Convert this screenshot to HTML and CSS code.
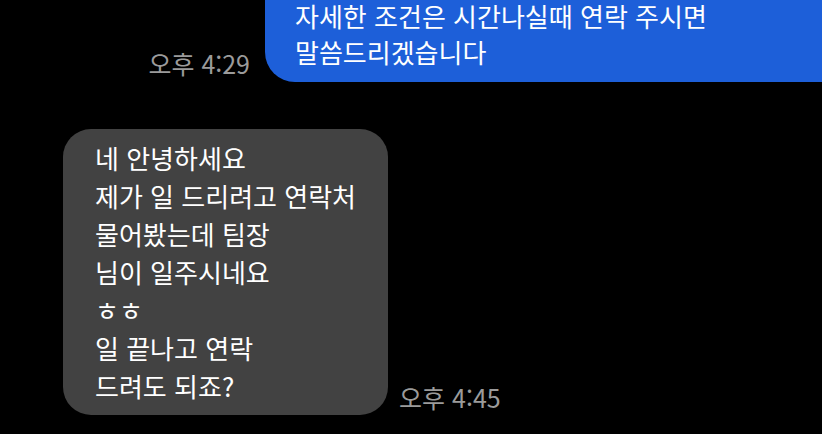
FILE: index.html
```html
<!DOCTYPE html>
<html lang="ko">
<head>
    <meta charset="UTF-8">
    <meta name="viewport" content="width=device-width, initial-scale=1.0">
    <title>대화</title>
    <link rel="stylesheet" href="styles.css">
</head>
<body>
    <div class="chat">
        <div class="row sent">
            <span class="time">오후 4:29</span>
            <div class="bubble blue">
                자세한 조건은 시간나실때 연락 주시면<br>
                말씀드리겠습니다
            </div>
        </div>

        <div class="row received">
            <div class="bubble grey">
                네 안녕하세요<br>
                제가 일 드리려고 연락처<br>
                물어봤는데 팀장<br>
                님이 일주시네요<br>
                ㅎㅎ<br>
                일 끝나고 연락<br>
                드려도 되죠?
            </div>
            <span class="time">오후 4:45</span>
        </div>
    </div>
</body>
</html>
```

FILE: styles.css
```css
body {
    margin: 0;
    padding: 0;
    background-color: #000;
    font-family: "Noto Sans CJK KR", "Noto Sans", sans-serif;
    color: #fff;
    overflow: hidden;
}
.chat {
    width: 822px;
    height: 434px;
    overflow: hidden;
}
.row {
    display: flex;
    align-items: flex-end;
}
.sent {
    justify-content: flex-end;
    margin-top: -32px;
    margin-right: -40px;
}
.received {
    margin-top: 47px;
    padding-left: 63px;
}
.bubble {
    font-size: 26px;
    line-height: 36px;
}
.blue {
    background-color: #1d5fd9;
    border-radius: 30px;
    padding: 30px 40px 12px 30px;
    width: 527px;
}
.grey {
    background-color: #424242;
    border-radius: 28px;
    padding: 10px 32px 10px 32px;
    line-height: 38px;
}
.time {
    color: #9b9b9b;
    font-size: 25px;
    line-height: 26px;
}
.sent .time {
    margin-right: 15px;
    margin-bottom: 6px;
}
.received .time {
    margin-left: 11px;
    margin-bottom: 5px;
}
```
